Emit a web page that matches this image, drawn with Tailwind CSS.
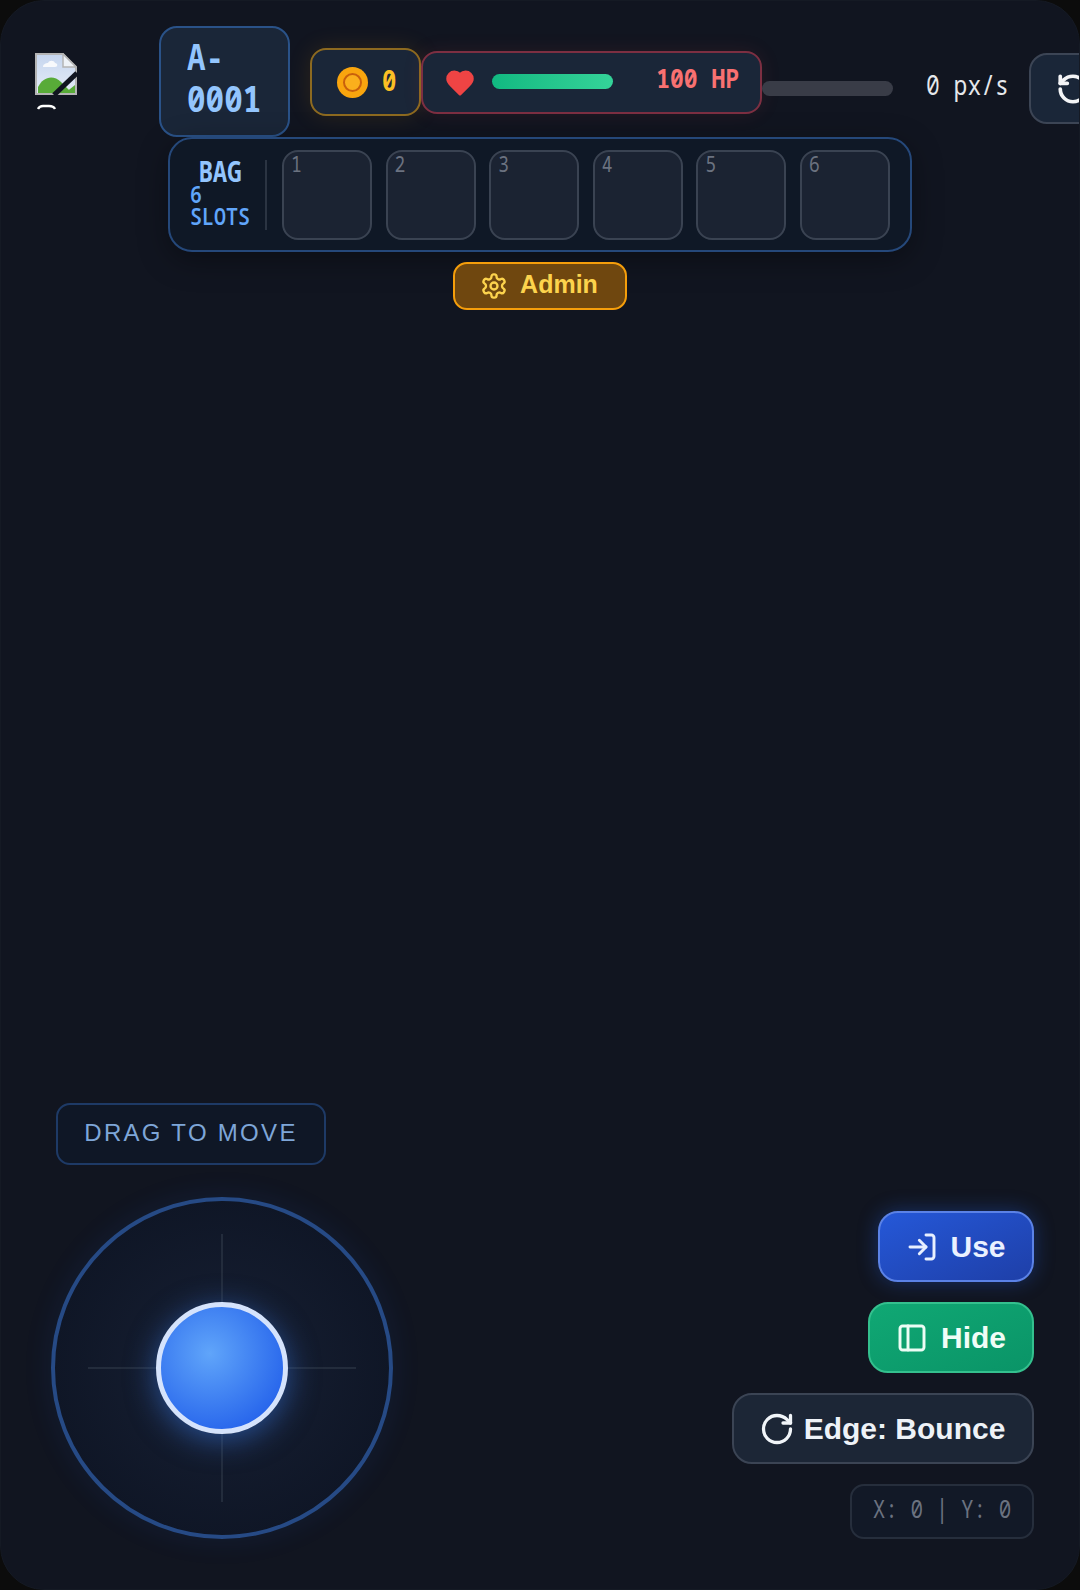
<!DOCTYPE html>
<html>
  <head>
    <title>Game HUD</title>
    <script src="https://cdn.jsdelivr.net/npm/@tailwindcss/browser@4"></script>
  </head>
  <body class="bg-[#0c0c0c]">
    <div class="relative flex flex-col justify-between w-[1080px] h-[1590px] overflow-hidden rounded-[44px] border border-[#151a24] bg-[#111520] font-['Liberation_Sans',sans-serif]">
      <!-- top hud -->
      <div class="flex flex-col items-start pt-[25px]">
        <div class="flex items-start">
          <!-- broken avatar -->
          <div class="flex flex-col w-[42px] ml-[34px] mt-[27px] mr-[82px] shrink-0">
            <svg width="42" height="42" viewBox="0 0 42 42">
              <defs>
                <linearGradient id="sky" x1="0" y1="0" x2="0" y2="1">
                  <stop offset="0" stop-color="#c5d5ee" />
                  <stop offset="1" stop-color="#e6edf8" />
                </linearGradient>
              </defs>
              <path d="M1 1H28L41 14V41H1Z" fill="url(#sky)" stroke="#b4b4b4" stroke-width="2" />
              <path d="M28 1V14H41Z" fill="#eef2f7" stroke="#b4b4b4" stroke-width="1.5" />
              <path d="M8 14c0-3 3-4 5-4 1-3 6-3 7 0 3 0 3 4 0 4Z" fill="#f7f9fc" />
              <path d="M3 40V34C8 24 18 21 26 29L37 40Z" fill="#58ab38" />
              <path d="M30 40L40 32V40Z" fill="#58ab38" />
              <path d="M19 42L42 20" stroke="#111520" stroke-width="5" />
            </svg>
            <svg class="mt-[9px] ml-[2px]" width="20" height="6" viewBox="0 0 20 6">
              <path d="M1 5C2 3 3 2 6 2H12C15 2 17 3 18 5" fill="none" stroke="#fff" stroke-width="2.4" />
            </svg>
          </div>

          <div class="w-[131px] h-[111px] shrink-0 rounded-[18px] border-2 border-[#2a5288] bg-[#1a2638] px-[26px] pt-[8px]">
            <div class="origin-top scale-y-[1.18] font-['Noto_Sans_Mono','DejaVu_Sans_Mono',monospace] text-[31px] leading-[34.75px] font-bold text-[#93c5fd]">A-0001</div>
          </div>

          <div class="flex items-center w-[111px] h-[68px] ml-[20px] mt-[22px] shrink-0 rounded-[16px] border-2 border-[#8d6a20] bg-[#1a2638] pl-[25px] shadow-[0_0_24px_rgba(245,158,11,0.12)]">
            <div class="flex items-center justify-center w-[31px] h-[31px] rounded-full bg-[#f9a50e]">
              <div class="w-[19px] h-[19px] rounded-full border-2 border-[#c9600c] bg-[#fbaf1c]"></div>
            </div>
            <span class="ml-[14px] -mt-[4px] scale-y-[1.18] font-['Noto_Sans_Mono','DejaVu_Sans_Mono',monospace] text-[24px] font-bold text-[#fbbf24]">0</span>
          </div>

          <div class="flex items-center w-[341px] h-[63px] mt-[25px] shrink-0 rounded-[16px] border-2 border-[#7d2f42] bg-[#1a2638] pl-[22px] shadow-[0_0_20px_rgba(239,68,68,0.1)]">
            <svg width="30" height="30" viewBox="0 0 24 24" fill="#ef4444" stroke="#ef4444" stroke-width="2" stroke-linejoin="round">
              <path d="M19 14c1.49-1.46 3-3.21 3-5.5A5.5 5.5 0 0 0 16.5 3c-1.76 0-3 .5-4.5 2-1.5-1.5-2.74-2-4.5-2A5.5 5.5 0 0 0 2 8.5c0 2.3 1.5 4.05 3 5.5l7 7Z" />
            </svg>
            <div class="w-[121px] h-[15px] ml-[17px] -mt-[2px] rounded-full bg-gradient-to-r from-[#10b981] to-[#34d399]"></div>
            <span class="ml-auto mr-[21px] -mt-[10px] scale-y-[1.18] font-['Noto_Sans_Mono','DejaVu_Sans_Mono',monospace] text-[23px] font-bold text-[#f87171]">100 HP</span>
          </div>

          <div class="w-[131px] h-[15px] mt-[55px] shrink-0 rounded-full bg-[#393c47]"></div>

          <span class="ml-[33px] mt-[42px] shrink-0 scale-y-[1.18] font-['Noto_Sans_Mono','DejaVu_Sans_Mono',monospace] text-[23px] leading-[32px] text-[#e5e7eb]">0 px/s</span>

          <div class="flex items-center w-[70px] h-[71px] ml-[20px] mt-[27px] shrink-0 rounded-[18px] border-2 border-[#3c4555] bg-[#1a2638] pl-[25px]">
            <svg class="shrink-0" width="34" height="34" viewBox="0 0 24 24" fill="none" stroke="#f3f4f6" stroke-width="2.6" stroke-linecap="round" stroke-linejoin="round">
              <path d="M3 12a9 9 0 1 0 9-9 9.75 9.75 0 0 0-6.74 2.74L3 8" />
              <path d="M3 3v5h5" />
            </svg>
          </div>
        </div>

        <!-- bag -->
        <div class="flex items-center w-[744px] h-[115px] ml-[167px] rounded-[24px] border-2 border-[#25487a] bg-[#0f1826] pl-[20px] shadow-[0_8px_30px_rgba(0,0,0,0.35)]">
          <div class="w-[60px] -mt-[2px] scale-y-[1.18] font-['Noto_Sans_Mono','DejaVu_Sans_Mono',monospace] text-[#60a5fa]">
            <div class="text-center text-[24px] leading-[20.5px] font-bold text-[#93c5fd]">BAG</div>
            <div class="text-[20px] leading-[18.6px] font-semibold w-[60px]">6 SLOTS</div>
          </div>
          <div class="w-[2px] h-[70px] ml-[15px] bg-[#2b3442]"></div>
          <div class="flex gap-[13.6px] ml-[15px]">
            <div class="w-[90px] h-[90px] rounded-[16px] border-2 border-[#3a4352] bg-[#1b2332] pl-[7px] pt-[1px] font-['Noto_Sans_Mono','DejaVu_Sans_Mono',monospace] text-[18px] leading-[22px] text-[#6b7280]"><span class="inline-block scale-y-[1.18]">1</span></div>
            <div class="w-[90px] h-[90px] rounded-[16px] border-2 border-[#3a4352] bg-[#1b2332] pl-[7px] pt-[1px] font-['Noto_Sans_Mono','DejaVu_Sans_Mono',monospace] text-[18px] leading-[22px] text-[#6b7280]"><span class="inline-block scale-y-[1.18]">2</span></div>
            <div class="w-[90px] h-[90px] rounded-[16px] border-2 border-[#3a4352] bg-[#1b2332] pl-[7px] pt-[1px] font-['Noto_Sans_Mono','DejaVu_Sans_Mono',monospace] text-[18px] leading-[22px] text-[#6b7280]"><span class="inline-block scale-y-[1.18]">3</span></div>
            <div class="w-[90px] h-[90px] rounded-[16px] border-2 border-[#3a4352] bg-[#1b2332] pl-[7px] pt-[1px] font-['Noto_Sans_Mono','DejaVu_Sans_Mono',monospace] text-[18px] leading-[22px] text-[#6b7280]"><span class="inline-block scale-y-[1.18]">4</span></div>
            <div class="w-[90px] h-[90px] rounded-[16px] border-2 border-[#3a4352] bg-[#1b2332] pl-[7px] pt-[1px] font-['Noto_Sans_Mono','DejaVu_Sans_Mono',monospace] text-[18px] leading-[22px] text-[#6b7280]"><span class="inline-block scale-y-[1.18]">5</span></div>
            <div class="w-[90px] h-[90px] rounded-[16px] border-2 border-[#3a4352] bg-[#1b2332] pl-[7px] pt-[1px] font-['Noto_Sans_Mono','DejaVu_Sans_Mono',monospace] text-[18px] leading-[22px] text-[#6b7280]"><span class="inline-block scale-y-[1.18]">6</span></div>
          </div>
        </div>

        <!-- admin -->
        <div class="flex items-center justify-center gap-[12px] w-[174px] h-[48px] ml-[452px] mt-[10px] rounded-[14px] border-2 border-[#f59e0b] bg-[#6f470f]">
          <svg class="-ml-[2px]" width="28" height="28" viewBox="0 0 24 24" fill="none" stroke="#fcd34d" stroke-width="2" stroke-linecap="round" stroke-linejoin="round">
            <path d="M12.22 2h-.44a2 2 0 0 0-2 2v.18a2 2 0 0 1-1 1.73l-.43.25a2 2 0 0 1-2 0l-.15-.08a2 2 0 0 0-2.73.73l-.22.38a2 2 0 0 0 .73 2.73l.15.1a2 2 0 0 1 1 1.72v.51a2 2 0 0 1-1 1.74l-.15.09a2 2 0 0 0-.73 2.73l.22.38a2 2 0 0 0 2.73.73l.15-.08a2 2 0 0 1 2 0l.43.25a2 2 0 0 1 1 1.73V20a2 2 0 0 0 2 2h.44a2 2 0 0 0 2-2v-.18a2 2 0 0 1 1-1.73l.43-.25a2 2 0 0 1 2 0l.15.08a2 2 0 0 0 2.73-.73l.22-.39a2 2 0 0 0-.73-2.73l-.15-.08a2 2 0 0 1-1-1.74v-.5a2 2 0 0 1 1-1.74l.15-.09a2 2 0 0 0 .73-2.73l-.22-.38a2 2 0 0 0-2.73-.73l-.15.08a2 2 0 0 1-2 0l-.43-.25a2 2 0 0 1-1-1.73V4a2 2 0 0 0-2-2z" />
            <circle cx="12" cy="12" r="3" />
          </svg>
          <span class="-mt-[3px] text-[25px] font-bold text-[#fcd34d]">Admin</span>
        </div>
      </div>

      <!-- bottom controls -->
      <div class="flex items-end justify-between pl-[50px] pr-[45px] pb-[50px]">
        <div class="flex flex-col items-start">
          <div class="flex items-center justify-center w-[270px] h-[62px] ml-[5px] pb-[3px] rounded-[14px] border-2 border-[#1e3a66] bg-[#0f1726] text-[24px] tracking-[2.3px] text-[#7ea6d8]">DRAG TO MOVE</div>
          <div class="relative flex items-center justify-center w-[342px] h-[342px] mt-[32px] rounded-full border-[4px] border-[#264a85] bg-[radial-gradient(circle,#172034_0%,#0f1626_72%)] shadow-[0_0_30px_rgba(37,99,235,0.1)]">
            <div class="absolute w-[268px] h-[2px] bg-[#232c3c]"></div>
            <div class="absolute w-[2px] h-[268px] bg-[#232c3c]"></div>
            <div class="relative w-[132px] h-[132px] rounded-full border-[5px] border-[#d5e3fc] bg-[radial-gradient(circle_at_40%_38%,#60a5fa,#2563eb_80%)] shadow-[0_6px_30px_rgba(59,130,246,0.5)]"></div>
          </div>
        </div>

        <div class="flex flex-col items-end gap-[20px]">
          <div class="flex items-center justify-center gap-[12px] w-[156px] h-[71px] rounded-[20px] border-2 border-[#5b82e6] bg-gradient-to-br from-[#2558d8] to-[#1e3fa8] shadow-[0_0_20px_rgba(37,99,235,0.35)]">
            <svg width="32" height="32" viewBox="0 0 24 24" fill="none" stroke="#e8f0ff" stroke-width="2.2" stroke-linecap="round" stroke-linejoin="round">
              <path d="M15 3h4a2 2 0 0 1 2 2v14a2 2 0 0 1-2 2h-4" />
              <polyline points="10 17 15 12 10 7" />
              <line x1="15" y1="12" x2="3" y2="12" />
            </svg>
            <span class="text-[30px] font-bold text-[#eaf1ff]">Use</span>
          </div>
          <div class="flex items-center justify-center gap-[13px] w-[166px] h-[71px] rounded-[20px] border-2 border-[#34c08e] bg-gradient-to-br from-[#10a874] to-[#0a9467]">
            <svg width="32" height="32" viewBox="0 0 24 24" fill="none" stroke="#ecfdf5" stroke-width="2.2" stroke-linecap="round" stroke-linejoin="round">
              <rect x="3" y="3" width="18" height="18" rx="2" />
              <path d="M9 3v18" />
            </svg>
            <span class="text-[30px] font-bold text-[#f0fdf7]">Hide</span>
          </div>
          <div class="flex items-center justify-center gap-[10px] w-[302px] h-[71px] rounded-[20px] border-2 border-[#3b4454] bg-[#1c2636]">
            <svg class="-ml-[2px]" width="36" height="36" viewBox="0 0 24 24" fill="none" stroke="#f1f5f9" stroke-width="2.2" stroke-linecap="round" stroke-linejoin="round">
              <path d="M21 12a9 9 0 1 1-9-9c2.52 0 4.93 1 6.74 2.74L21 8" />
              <path d="M21 3v5h-5" />
            </svg>
            <span class="-ml-[1px] text-[30px] font-bold text-[#eef2f7]">Edge: Bounce</span>
          </div>
          <div class="flex items-center justify-center w-[184px] h-[55px] pb-[3px] rounded-[14px] border-2 border-[#262e3c] bg-[#121927] font-['Noto_Sans_Mono','DejaVu_Sans_Mono',monospace] text-[21px] text-[#6b7280]"><span class="scale-y-[1.18]">X: 0 | Y: 0</span></div>
        </div>
      </div>
    </div>
  </body>
</html>
